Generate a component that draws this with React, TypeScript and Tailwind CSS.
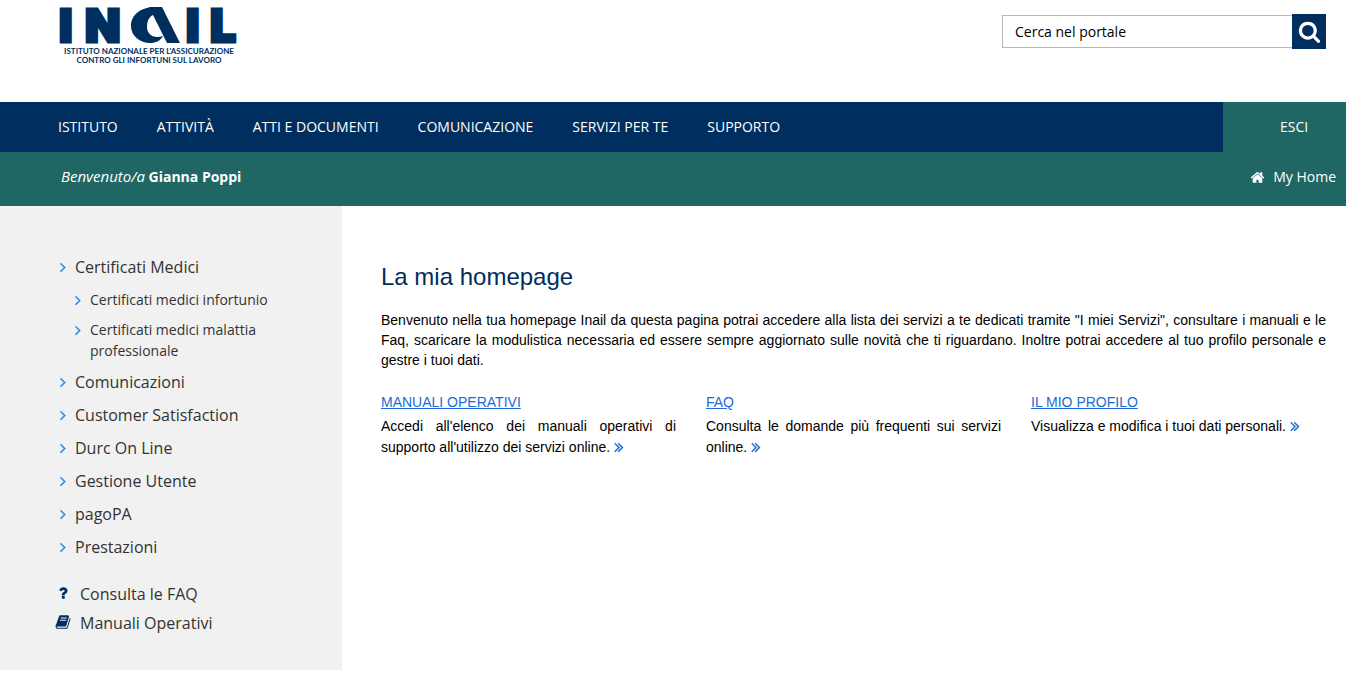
import type { ReactNode } from 'react';

interface IconProps {
  path: string;
  className?: string;
}

interface ServiceCard {
  title: string;
  text: string;
}

const icons = {
  angle: 'M1171 960q0 13-10 23l-466 466q-10 10-23 10t-23-10l-50-50q-10-10-10-23t10-23l393-393-393-393q-10-10-10-23t10-23l50-50q10-10 23-10t23 10l466 466q10 10 10 23z',
  doubleAngle: 'M979 960q0 13-10 23l-466 466q-10 10-23 10t-23-10l-50-50q-10-10-10-23t10-23l393-393-393-393q-10-10-10-23t10-23l50-50q10-10 23-10t23 10l466 466q10 10 10 23zm384 0q0 13-10 23l-466 466q-10 10-23 10t-23-10l-50-50q-10-10-10-23t10-23l393-393-393-393q-10-10-10-23t10-23l50-50q10-10 23-10t23 10l466 466q10 10 10 23z',
  home: 'M1472 992v480q0 26-19 45t-45 19h-384v-384h-256v384h-384q-26 0-45-19t-19-45v-480q0-1 .5-3t.5-3l575-474 575 474q1 2 1 6zm223-69l-62 74q-8 9-21 11h-3q-13 0-21-7l-692-577-692 577q-12 8-24 7-13-2-21-11l-62-74q-8-10-7-23.5t11-21.5l719-599q32-26 76-26t76 26l244 204v-195q0-14 9-23t23-9h192q14 0 23 9t9 23v408l219 182q10 8 11 21.5t-7 23.5z',
  book: 'M1703 478q40 57 18 129l-275 906q-19 64-76.5 107.5t-122.5 43.5h-923q-77 0-148.5-53.5t-99.5-131.5q-24-67-2-127 0-4 3-27t4-37q1-8-3-21.5t-3-19.5q2-11 8-21t16.5-23.5 16.5-23.5q23-38 45-91.5t30-91.5q3-10 .5-30t-.5-28q3-11 17-28t17-23q21-36 42-92t25-90q1-9-2.5-32t.5-28q4-13 22-30.5t22-22.5q19-26 42.5-84.5t27.5-96.5q1-8-3-25.5t-2-26.5q2-8 9-18t18-23 17-21q8-12 16.5-30.5t15-35 16-36 19.5-32 26.5-23.5 36-11.5 47.5 5.5l-1 3q38-9 51-9h761q74 0 114 56t18 130l-274 906q-36 119-71.5 153.5t-128.5 34.5h-869q-27 0-38 15-11 16-1 43 24 70 144 70h923q29 0 56-15.5t35-41.5l300-987q7-22 5-57 38 15 59 43zm-1064 2q-4 13 2 22.5t20 9.5h608q13 0 25.5-9.5t16.5-22.5l21-64q4-13-2-22.5t-20-9.5h-608q-13 0-25.5 9.5t-16.5 22.5zm-83 256q-4 13 2 22.5t20 9.5h608q13 0 25.5-9.5t16.5-22.5l21-64q4-13-2-22.5t-20-9.5h-608q-13 0-25.5 9.5t-16.5 22.5z',
  search: 'M1216 832q0-185-131.5-316.5t-316.5-131.5-316.5 131.5-131.5 316.5 131.5 316.5 316.5 131.5 316.5-131.5 131.5-316.5zm512 832q0 52-38 90t-90 38q-54 0-90-38l-343-342q-179 124-399 124-143 0-273.5-55.5t-225-150-150-225-55.5-273.5 55.5-273.5 150-225 225-150 273.5-55.5 273.5 55.5 225 150 150 225 55.5 273.5q0 220-124 399l343 343q37 37 37 90z',
  question: 'M1088 1256v240q0 16-12 28t-28 12h-240q-16 0-28-12t-12-28v-240q0-16 12-28t28-12h240q16 0 28 12t12 28zm316-600q0 54-15.5 101t-35 76.5-55 59.5-57.5 43.5-61 35.5q-41 23-68.5 65t-27.5 67q0 17-12 32.5t-28 15.5h-240q-15 0-25.5-18.5t-10.5-37.5v-45q0-83 65-156.5t143-108.5q59-27 84-56t25-76q0-42-46.5-74t-107.5-32q-65 0-108 29-35 25-107 115-13 16-31 16-12 0-25-8l-164-125q-13-10-15.5-25t5.5-28q160-266 464-266 80 0 161 31t146 83 106 127.5 41 158.5z',
};

const menu = ['ISTITUTO', 'ATTIVITÀ', 'ATTI E DOCUMENTI', 'COMUNICAZIONE', 'SERVIZI PER TE', 'SUPPORTO'];

const certificates = ['Certificati medici infortunio', 'Certificati medici malattia professionale'];

const services = ['Comunicazioni', 'Customer Satisfaction', 'Durc On Line', 'Gestione Utente', 'pagoPA', 'Prestazioni'];

const cards: ServiceCard[] = [
  { title: 'MANUALI OPERATIVI', text: "Accedi all'elenco dei manuali operativi di supporto all'utilizzo dei servizi online." },
  { title: 'FAQ', text: 'Consulta le domande più frequenti sui servizi online.' },
  { title: 'IL MIO PROFILO', text: 'Visualizza e modifica i tuoi dati personali.' },
];

function Icon({ path, className }: IconProps) {
  return (
    <svg viewBox="0 0 1792 1792" className={className} fill="currentColor" aria-hidden="true">
      <path d={path} />
    </svg>
  );
}

function Logo() {
  return (
    <a href="#" className="flex w-[178px] flex-col items-center text-[#002e5f]">
      <svg viewBox="0 0 178 43" className="h-[43px] w-[178px] overflow-visible" fill="currentColor" role="img" aria-label="INAIL">
        <g className="font-['Inter',sans-serif] text-[46px] font-black" stroke="currentColor" strokeWidth="3">
          <text x="-1" y="42">I</text>
          <text x="25" y="42">N</text>
          <text x="126" y="42">I</text>
          <text x="150" y="42">L</text>
        </g>
        {/* swoosh in the middle of the wordmark */}
        <path d="M89 7h13l18 36h-13z" />
        <path d="M96 7C80 7 71 15 71 26c0 10 9 17 19 17 6 0 10-2 13-7-10 3-16-2-16-9 0-6 2-11 8-13z" />
      </svg>
      <span className="mt-[4px] text-center font-['Lato',sans-serif] text-[8px] leading-[9px] font-bold whitespace-nowrap">
        ISTITUTO NAZIONALE PER L'ASSICURAZIONE
        <br />
        CONTRO GLI INFORTUNI SUL LAVORO
      </span>
    </a>
  );
}

function AngleIcon() {
  return <Icon path={icons.angle} className="mt-[3px] size-4 shrink-0 stroke-current stroke-[50px] text-[#2e8ae6]" />;
}

function SideLink({ children }: { children: ReactNode }) {
  return (
    <a href="#" className="flex items-start gap-1 text-base leading-[22px]">
      <AngleIcon />
      {children}
    </a>
  );
}

function Sidebar() {
  return (
    <aside className="w-[342px] shrink-0 bg-[#f1f1f1] pt-[50px] pr-16 pb-9 pl-[55px] text-[#333]">
      <nav aria-label="Servizi">
        <ul className="flex flex-col gap-[11px]">
          <li>
            <SideLink>Certificati Medici</SideLink>
            <ul className="mt-[11px] -mb-px flex flex-col gap-[9px] pl-[15px]">
              {certificates.map(item => (
                <li key={item}>
                  <a href="#" className="flex items-start gap-1 text-sm leading-[21px]">
                    <AngleIcon />
                    {item}
                  </a>
                </li>
              ))}
            </ul>
          </li>
          {services.map(item => (
            <li key={item}>
              <SideLink>{item}</SideLink>
            </li>
          ))}
        </ul>
      </nav>
      <ul className="mt-[25px] flex flex-col gap-[7px] leading-[22px]">
        <li>
          <a href="#" className="flex items-start gap-[9px]">
            <Icon path={icons.question} className="mt-[2px] size-4 text-[#002e5f]" />
            Consulta le FAQ
          </a>
        </li>
        <li>
          <a href="#" className="flex items-start gap-[9px]">
            <Icon path={icons.book} className="mt-[2px] size-4 text-[#002e5f]" />
            Manuali Operativi
          </a>
        </li>
      </ul>
    </aside>
  );
}

export default function App() {
  return (
    <div className="bg-white font-['Open_Sans',sans-serif] text-black">
      <header>
        <div className="flex h-[102px] items-start justify-between pr-5 pl-[60px]">
          <Logo />
          <form className="mt-[14px] flex items-center" onSubmit={e => e.preventDefault()}>
            <input
              type="text"
              aria-label="Cerca nel portale"
              defaultValue="Cerca nel portale"
              className="h-[33px] w-[290px] border border-r-0 border-[#b8b8b8] px-3 text-sm outline-none"
            />
            <button type="submit" aria-label="Cerca" className="flex h-[35px] w-[34px] items-center justify-center bg-[#002e5f] text-white">
              <Icon path={icons.search} className="size-[23px]" />
            </button>
          </form>
        </div>

        <nav aria-label="Principale" className="flex h-[50px] items-stretch justify-between bg-[#002e5f] text-sm text-white">
          <ul className="flex items-center gap-[39px] pl-[58px]">
            {menu.map(item => (
              <li key={item}>
                <a href="#">{item}</a>
              </li>
            ))}
          </ul>
          <a href="#" className="flex w-[123px] items-center bg-[#1f6664] pl-[57px]">ESCI</a>
        </nav>

        <div className="flex h-[54px] items-center justify-between bg-[#1f6664] pr-[10px] pb-1 pl-[61px] text-sm text-white">
          <p>
            <em className="text-[15px]">Benvenuto/a</em> <strong>Gianna Poppi</strong>
          </p>
          <a href="#" className="flex items-center gap-2">
            <Icon path={icons.home} className="size-[15px]" />
            My Home
          </a>
        </div>
      </header>

      <div className="flex items-start">
        <Sidebar />
        <main className="min-w-0 flex-1 pt-14 pr-5 pl-[39px] font-['Liberation_Sans',Arial,sans-serif] text-sm">
          <h1 className="text-2xl leading-[30px] text-[#002e5f]">La mia homepage</h1>
          <p className="mt-[18px] text-justify leading-5">
            Benvenuto nella tua homepage Inail da questa pagina potrai accedere alla lista dei servizi a te dedicati
            tramite "I miei Servizi", consultare i manuali e le Faq, scaricare la modulistica necessaria ed essere sempre
            aggiornato sulle novità che ti riguardano. Inoltre potrai accedere al tuo profilo personale e gestre i tuoi
            dati.
          </p>
          <div className="mt-[22px] grid grid-cols-3 gap-[30px]">
            {cards.map(card => (
              <section key={card.title}>
                <h2 className="leading-5">
                  <a href="#" className="text-[#1a6bd8] underline">{card.title}</a>
                </h2>
                <p className="mt-1 text-justify leading-[21px]">
                  {card.text}{' '}
                  <a href="#" aria-label={card.title} className="-ml-[3px] inline-block pb-[2px] align-middle text-[#1a6bd8]">
                    <Icon path={icons.doubleAngle} className="size-4 stroke-current stroke-[40px]" />
                  </a>
                </p>
              </section>
            ))}
          </div>
        </main>
      </div>
    </div>
  );
}
